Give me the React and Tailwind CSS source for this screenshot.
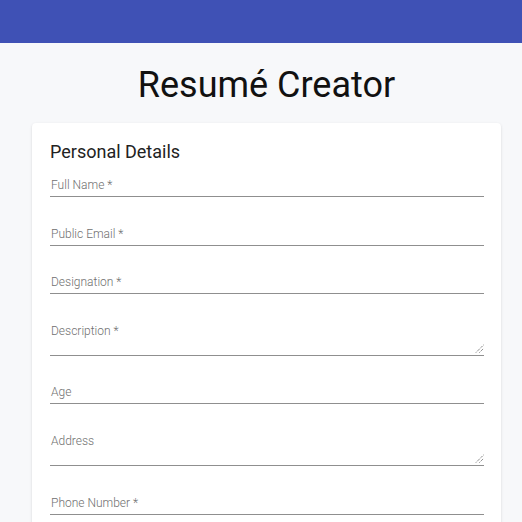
import React from "react";

const fields = [
  { label: "Full Name *", multiline: false, pt: "pt-[12px]" },
  { label: "Public Email *", multiline: false, pt: "pt-[28px]" },
  { label: "Designation *", multiline: false, pt: "pt-[27px]" },
  { label: "Description *", multiline: true, pt: "pt-[28px]" },
  { label: "Age", multiline: false, pt: "pt-[27px]" },
  { label: "Address", multiline: true, pt: "pt-[28px]" },
  { label: "Phone Number *", multiline: false, pt: "pt-[28px]" },
];

const ResizeGrip = () => (
  <svg
    className="absolute right-0 bottom-[2px]"
    width="9"
    height="9"
    viewBox="0 0 9 9"
  >
    <line x1="1" y1="8.5" x2="8.5" y2="1" stroke="#555" strokeWidth="1" strokeDasharray="1 1" />
    <line x1="4.5" y1="8.5" x2="8.5" y2="4.5" stroke="#555" strokeWidth="1" strokeDasharray="1 1" />
  </svg>
);

const Field = ({ label, multiline, pt }) => (
  <div className={pt}>
    <div
      className={`relative border-b border-[#8f8f8f] ${
        multiline ? "h-[34px]" : "h-[21px]"
      }`}
    >
      <span className="block pl-px pt-px text-[12px] leading-[16px] font-light text-[#6f6f6f]">
        {label}
      </span>
      {multiline && <ResizeGrip />}
    </div>
  </div>
);

const App = () => {
  return (
    <div
      className="h-screen overflow-hidden bg-[#f7f8fa]"
      style={{ fontFamily: "Roboto, 'Liberation Sans', sans-serif" }}
    >
      <header className="h-[43px] bg-[#3f51b5]" />
      <main className="ml-[32px] mr-[21px]">
        <h1 className="mt-[21px] text-center text-[36px] leading-[42px] text-[#111]">
          Resumé Creator
        </h1>
        <div className="mt-[17px] rounded-[4px] bg-white pl-[18px] pr-[17px] pt-[17px] pb-6 shadow-[0_1px_3px_rgba(0,0,0,0.12),0_1px_1px_rgba(0,0,0,0.06)]">
          <h2 className="text-[18px] leading-[24px] text-[#222]">
            Personal Details
          </h2>
          {fields.map((f) => (
            <Field key={f.label} label={f.label} multiline={f.multiline} pt={f.pt} />
          ))}
        </div>
      </main>
    </div>
  );
};

export default App;
